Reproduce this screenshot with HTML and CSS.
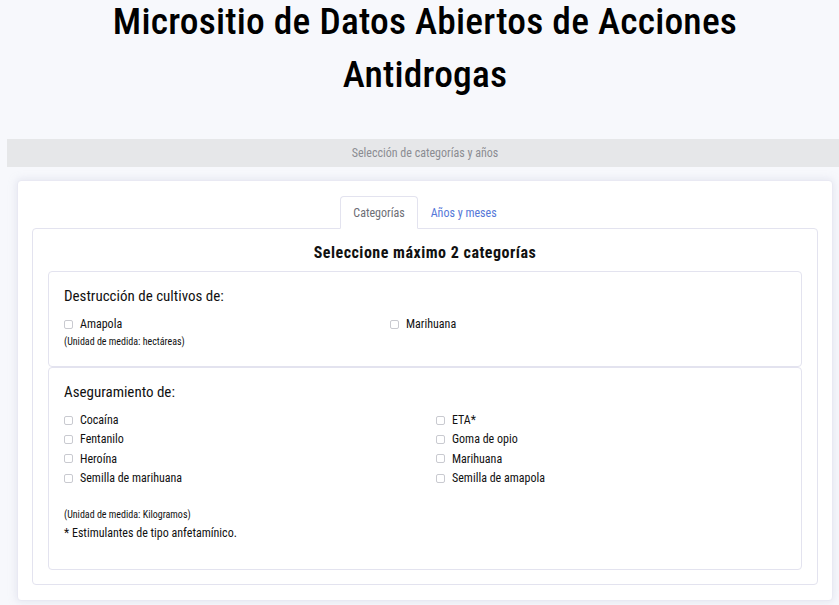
FILE: index.html
```html
<!DOCTYPE html>
<html lang="es">
<head>
<meta charset="utf-8">
<title>Micrositio de Datos Abiertos de Acciones Antidrogas</title>
<link rel="stylesheet" href="styles.css">
</head>
<body>
<header class="page-head">
  <h1 class="title">Micrositio de Datos Abiertos de Acciones Antidrogas</h1>
</header>
<div class="section-bar">Selección de categorías y años</div>
<main class="card">
  <nav class="tabs">
    <span class="tab active">Categorías</span>
    <span class="tab link">Años y meses</span>
  </nav>
  <section class="tab-body">
    <h2 class="heading">Seleccione máximo 2 categorías</h2>
    <div class="group group-a">
      <h3 class="group-title">Destrucción de cultivos de:</h3>
      <div class="grid grid-a">
        <label class="check"><span class="box"></span>Amapola</label>
        <label class="check"><span class="box"></span>Marihuana</label>
      </div>
      <p class="unit">(Unidad de medida: hectáreas)</p>
    </div>
    <div class="group group-b">
      <h3 class="group-title">Aseguramiento de:</h3>
      <div class="grid grid-b">
        <div class="col">
          <label class="check"><span class="box"></span>Cocaína</label>
          <label class="check"><span class="box"></span>Fentanilo</label>
          <label class="check"><span class="box"></span>Heroína</label>
          <label class="check"><span class="box"></span>Semilla de marihuana</label>
        </div>
        <div class="col">
          <label class="check"><span class="box"></span>ETA*</label>
          <label class="check"><span class="box"></span>Goma de opio</label>
          <label class="check"><span class="box"></span>Marihuana</label>
          <label class="check"><span class="box"></span>Semilla de amapola</label>
        </div>
      </div>
      <p class="unit unit-b">(Unidad de medida: Kilogramos)</p>
      <p class="note">* Estimulantes de tipo anfetamínico.</p>
    </div>
  </section>
</main>
</body>
</html>
```
FILE: styles.css
```css
* { box-sizing: border-box; }
html, body { margin: 0; padding: 0; }
body {
  background: #f7f8fc;
  font-family: Roboto, "Liberation Sans", sans-serif;
  font-stretch: 75%;
  color: #111;
  width: 839px;
  height: 605px;
  overflow: hidden;
}
.page-head {
  padding-left: 11px;
  display: flex;
  justify-content: center;
}
.title {
  margin: -5px 0 0;
  width: 680px;
  text-align: center;
  font-size: 37.5px;
  font-weight: 500;
  line-height: 53px;
  color: #000;
  letter-spacing: 0.2px;
}
.section-bar {
  margin: 38px 0 0 7px;
  height: 28px;
  background: #e6e7e9;
  color: #8b8c92;
  font-size: 12px;
  padding-left: 4px;
  display: flex;
  align-items: center;
  justify-content: center;
}
.card {
  margin: 13px 6px 0 17px;
  background: #fff;
  border-radius: 4px;
  border: 1px solid #e9e9f3;
  box-shadow: 0 0 8px rgba(180,185,210,0.35);
  padding: 15px 14px 15px 14px;
  height: 421px;
}
.tabs {
  display: flex;
  justify-content: center;
}
.tab {
  font-size: 12px;
  height: 33px;
  display: flex;
  align-items: center;
  padding: 0 12px;
  border: 1px solid transparent;
  border-radius: 4px 4px 0 0;
  border-bottom: 1px solid #e3e3ef;
}
.tab.active {
  color: #6d6e75;
  border-color: #e3e3ef;
  border-bottom-color: #fff;
}
.tab.link { color: #5577d8; }
.tab-body {
  margin-top: -1px;
  border: 1px solid #e3e3ef;
  border-radius: 4px;
  padding: 15px 15px 16px 15px;
  height: 357px;
}
.heading {
  margin: 0 0 9px;
  text-align: center;
  font-size: 16px;
  font-weight: 700;
  letter-spacing: 0.5px;
  line-height: 18px;
}
.group {
  border: 1px solid #e3e3ef;
  border-radius: 4px;
  padding: 15px 15px 0 15px;
}
.group-a { height: 96px; }
.group-b { height: 203px; margin-top: 0; }
.group-title {
  margin: 0 0 10px;
  font-size: 15px;
  font-weight: 400;
  line-height: 18px;
}
.grid { display: grid; }
.grid-a { grid-template-columns: 326px 1fr; }
.grid-b { grid-template-columns: 372px 1fr; }
.col { display: flex; flex-direction: column; }
.check {
  display: flex;
  align-items: center;
  font-size: 12px;
  line-height: 19.4px;
  height: 19.4px;
}
.box {
  width: 9px;
  height: 9px;
  border: 1px solid #c9cad0;
  border-radius: 2px;
  margin: -1px 7px 0 0;
  background: #fff;
}
.unit {
  margin: 1px 0 0;
  font-size: 10px;
  line-height: 13px;
}
.unit-b { margin-top: 19px; }
.note {
  margin: 4px 0 0;
  font-size: 12px;
  line-height: 16px;
}
```
